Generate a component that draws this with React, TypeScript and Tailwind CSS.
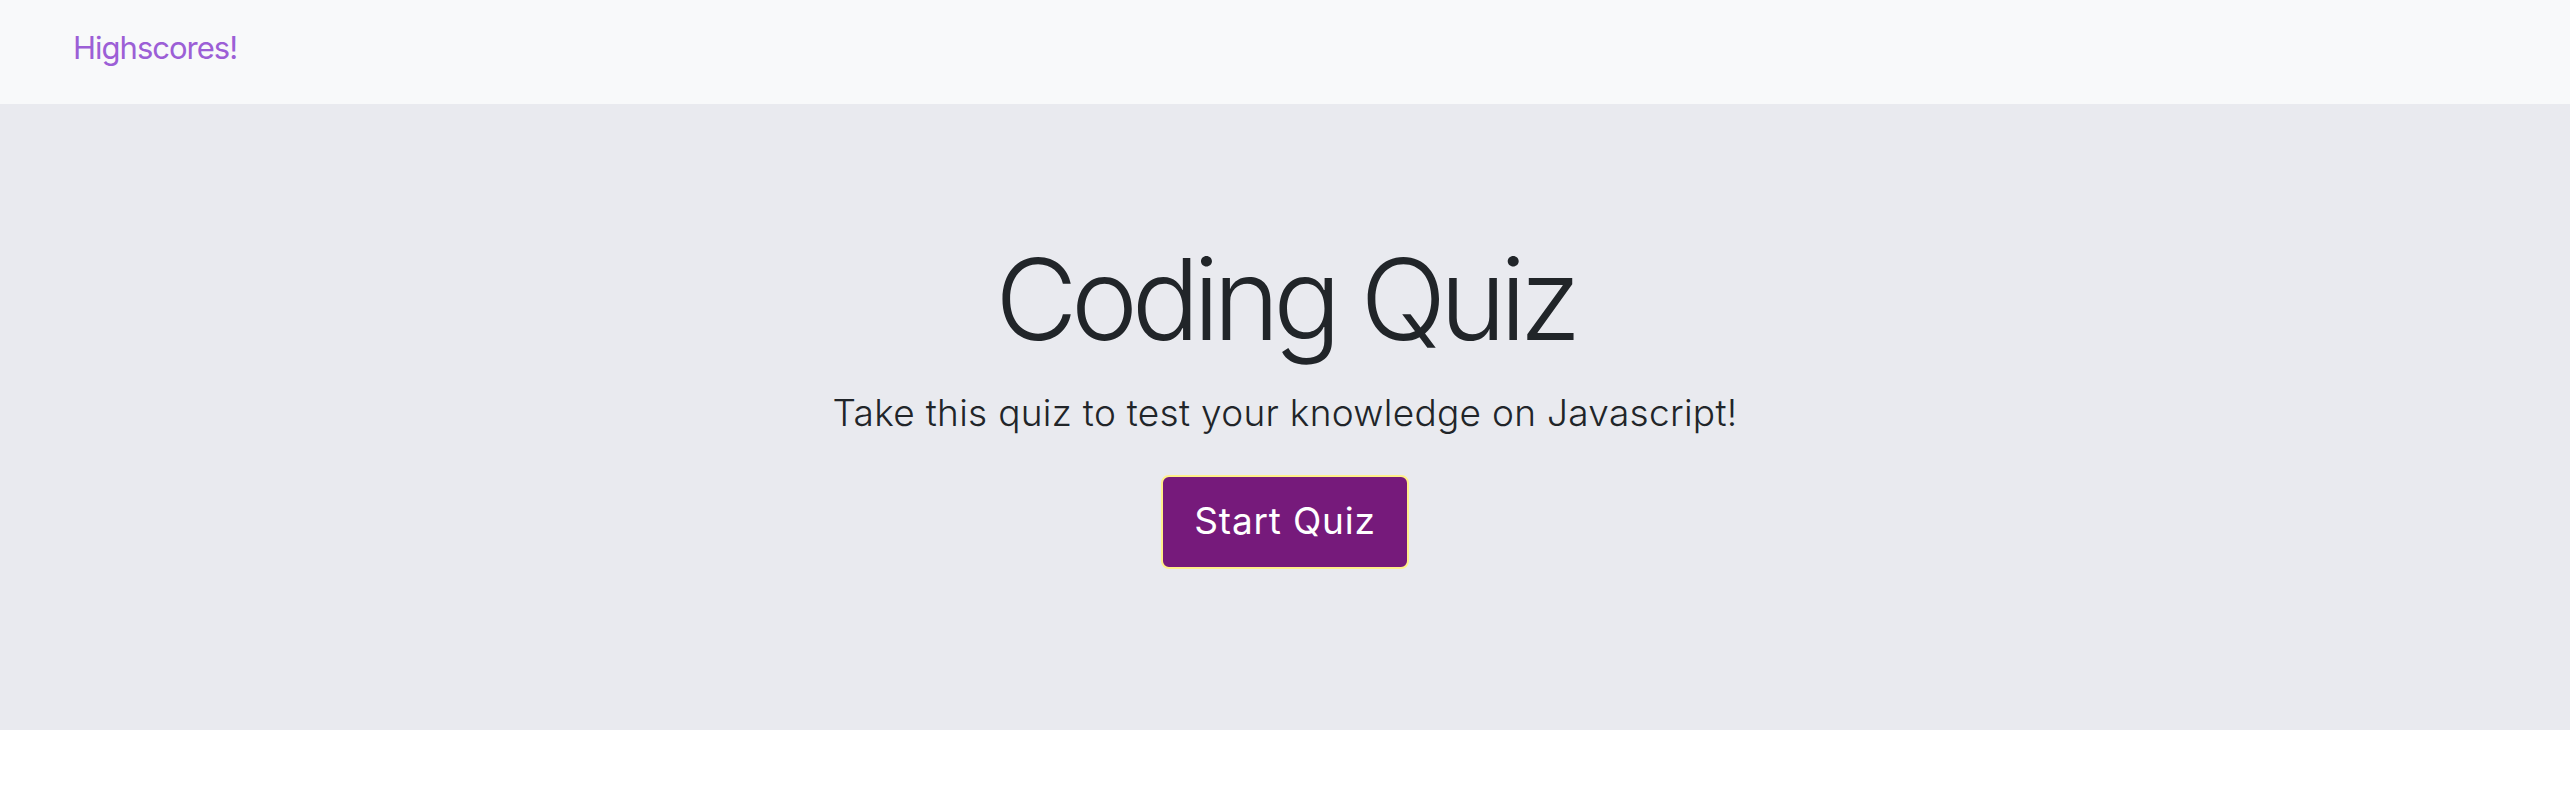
export default function App() {
  return (
    <div className="min-h-screen bg-white font-['Inter',sans-serif]">
      {/* navbar */}
      <nav className="h-[104px] bg-[#f8f9fa] px-[73px] pt-[32px]">
        <a href="#" className="text-[31px] leading-none tracking-[-1px] text-[#9c5fd6]">
          Highscores!
        </a>
      </nav>

      {/* jumbotron */}
      <section className="h-[626px] bg-[#e9eaef] pt-[139px] flex flex-col items-center">
        <h1 className="text-[113px] leading-none font-light tracking-[-6.4px] text-[#212529]">Coding Quiz</h1>
        <p className="mt-[38px] text-[37px] leading-none font-light tracking-[0.3px] text-[#212529]">
          Take this quiz to test your knowledge on Javascript!
        </p>
        <button className="mt-[44px] rounded-[8px] border-2 border-[#fff08a] bg-[#761a7b] px-[31px] pt-[25px] pb-[28px] text-[37px] leading-none tracking-[0.8px] text-white">
          Start Quiz
        </button>
      </section>
    </div>
  );
}
